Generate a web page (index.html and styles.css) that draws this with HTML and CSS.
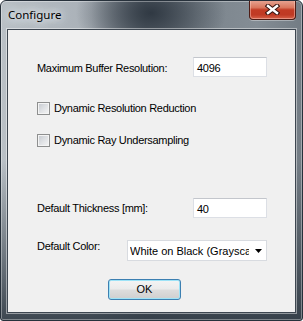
FILE: index.html
```html
<!DOCTYPE html>
<html>
<head>
    <title>Configure</title>
    <meta charset="utf-8">
    <link rel="stylesheet" href="styles.css">
</head>
<body>
    <div class="window">
        <div class="titlebar">
            <span class="title">Configure</span>
            <span class="close">
                <svg width="15" height="11" viewBox="0 0 15 11">
                    <path d="M3 2 L12 9 M12 2 L3 9" stroke="#3a1612" stroke-width="4.6" stroke-linecap="square" fill="none"/>
                    <path d="M3 2 L12 9 M12 2 L3 9" stroke="#ffffff" stroke-width="2.4" stroke-linecap="square" fill="none"/>
                </svg>
            </span>
        </div>
        <form class="client">
            <div class="row row-buffer">
                <label class="label label-wide pad5">Maximum Buffer Resolution:</label>
                <div class="edit">4096</div>
            </div>
            <div class="check check-first"><span class="box"></span>Dynamic Resolution Reduction</div>
            <div class="check check-second"><span class="box"></span>Dynamic Ray Undersampling</div>
            <div class="row row-thick">
                <label class="label label-wide pad4">Default Thickness [mm]:</label>
                <div class="edit">40</div>
            </div>
            <div class="row row-color">
                <label class="label label-narrow">Default Color:</label>
                <div class="combo">
                    <span class="combo-text">White on Black (Grayscale)</span>
                    <span class="combo-arrow">
                        <svg width="7" height="4" viewBox="0 0 7 4"><polygon points="0,0 7,0 3.5,4" fill="#000"/></svg>
                    </span>
                </div>
            </div>
            <div class="actions">
                <button type="button" class="btn">OK</button>
            </div>
        </form>
    </div>
</body>
</html>
```

FILE: styles.css
```css
html, body {
    margin: 0;
    background: #fff;
}
.window {
    width: 303px;
    height: 321px;
    box-sizing: border-box;
    border: 1px solid #27313b;
    border-radius: 6px 6px 3px 3px;
    padding: 0 6px 7px 6px;
    display: flex;
    flex-direction: column;
    overflow: hidden;
    box-shadow: inset 0 0 0 1px rgba(255, 255, 255, .35);
    background:
        linear-gradient(to bottom, rgba(44, 53, 63, 0) 0, rgba(44, 53, 63, 0) 50%, rgba(48, 58, 68, .9) 100%),
        radial-gradient(ellipse 75px 50px at 150px 12px, rgba(48, 57, 67, 1), rgba(48, 57, 67, 0)),
        linear-gradient(to right, #b9c0c6 0, #a9b0b7 30%, #6a737c 48%, #7b848c 65%, #848d95 85%, #737c84 100%);
}
.titlebar {
    height: 28px;
    display: flex;
    justify-content: space-between;
    align-items: flex-start;
}
.title {
    margin-left: 1px;
    padding-top: 6px;
    font-family: "Noto Sans", sans-serif;
    font-size: 11.5px;
    line-height: 16px;
    color: #000;
    text-shadow: 0 0 6px #e6eaee, 0 0 10px #e6eaee, 0 0 14px #dfe4e8;
}
.close {
    width: 47px;
    height: 20px;
    margin-top: -1px;
    box-sizing: border-box;
    border: 1px solid #4e1c15;
    border-top: none;
    border-radius: 0 0 4px 4px;
    display: flex;
    align-items: center;
    justify-content: center;
    padding-bottom: 1px;
    background: linear-gradient(to bottom, #e8a897 0, #d9765d 40%, #c23b24 52%, #bf3a24 78%, #d6624a 100%);
    box-shadow: inset 0 0 0 1px rgba(255, 210, 200, .45), 0 1px 0 rgba(255, 255, 255, .35);
}
.client {
    flex: 1;
    margin: 0;
    border: 1px solid #3d4650;
    box-shadow: 0 0 0 1px rgba(255, 255, 255, .45);
    background: #f0f0f0;
    padding-left: 29px;
    display: flex;
    flex-direction: column;
    font-family: "Liberation Sans", Arial, sans-serif;
    font-size: 11px;
    letter-spacing: -0.3px;
    line-height: 13px;
    color: #000;
}
.row {
    display: flex;
    align-items: flex-start;
}
.row-buffer {
    margin-top: 27px;
}
.row-thick {
    margin-top: 51px;
}
.row-color {
    margin-top: 22px;
}
.label-wide {
    width: 156px;
}
.label-narrow {
    width: 90px;
}
.pad5 {
    padding-top: 5px;
}
.pad4 {
    padding-top: 4px;
}
.edit {
    width: 74px;
    height: 20px;
    box-sizing: border-box;
    padding: 4px 3px 0;
    background: #fff;
    border: 1px solid #dcdfe5;
    border-top-color: #c3c6cc;
}
.check {
    display: flex;
    align-items: center;
    height: 13px;
}
.check-first {
    margin-top: 25px;
}
.check-second {
    margin-top: 19px;
}
.box {
    width: 13px;
    height: 13px;
    box-sizing: border-box;
    margin-right: 4px;
    border: 1px solid #8e8f8f;
    box-shadow: inset 0 0 0 1px #f4f4f4;
    background: linear-gradient(135deg, #c4c8ce 0, #dfe1e4 50%, #f6f6f6 100%);
}
.combo {
    width: 140px;
    height: 21px;
    box-sizing: border-box;
    border: 1px solid #d8dbe0;
    background: #fff;
    display: flex;
    align-items: flex-start;
    padding: 4px 0 0 2px;
}
.combo-text {
    flex: 1;
    overflow: hidden;
    white-space: nowrap;
    letter-spacing: 0;
}
.combo-arrow {
    width: 17px;
    display: flex;
    justify-content: flex-end;
    padding: 4px 4px 0 0;
    box-sizing: border-box;
}
.actions {
    margin-top: 18px;
    padding-left: 71px;
}
.btn {
    width: 73px;
    height: 21px;
    padding: 0;
    margin: 0;
    font-family: "Liberation Sans", Arial, sans-serif;
    font-size: 11px;
    line-height: 13px;
    color: #000;
    border: 1px solid #3c7fb1;
    border-radius: 3px;
    box-shadow: inset 0 0 0 1px #9ee3f7;
    background: linear-gradient(to bottom, #f4f4f4 0, #ebebeb 48%, #dddddd 52%, #cfcfcf 100%);
}
```
